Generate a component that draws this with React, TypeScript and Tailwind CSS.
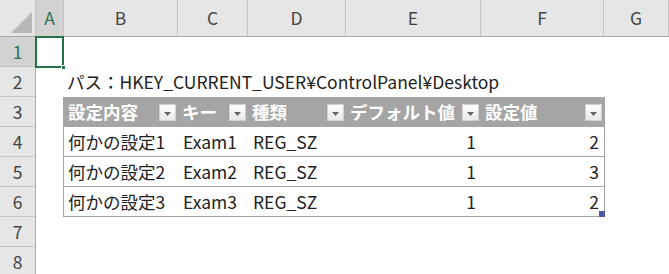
import React from "react";

const FONT = { fontFamily: '"Noto Sans CJK JP", "Noto Sans", sans-serif' };

const colHeaders = [
  { label: "A", cls: "w-[28px] bg-[#d2d2d2] text-[#2f6f52]" },
  { label: "B", cls: "w-[114px]" },
  { label: "C", cls: "w-[70px]" },
  { label: "D", cls: "w-[98px]" },
  { label: "E", cls: "w-[135px]" },
  { label: "F", cls: "w-[123px]" },
  { label: "G", cls: "flex-1" },
];

const tableCols = [
  { head: "設定内容", w: "w-[114px]" },
  { head: "キー", w: "w-[70px]" },
  { head: "種類", w: "w-[98px]" },
  { head: "デフォルト値", w: "w-[135px]" },
  { head: "設定値", w: "w-[123px]" },
];

const rows = [
  ["何かの設定1", "Exam1", "REG_SZ", "1", "2"],
  ["何かの設定2", "Exam2", "REG_SZ", "1", "3"],
  ["何かの設定3", "Exam3", "REG_SZ", "1", "2"],
];

function FilterButton() {
  return (
    <span className="ml-auto mr-[2px] flex h-[17px] w-[17px] shrink-0 items-center justify-center border border-[#d0d0d0] bg-gradient-to-b from-white to-[#e9e9e9] pt-[3px]">
      <svg width="7" height="4" viewBox="0 0 7 4">
        <path d="M0 0h7L3.5 4z" fill="#666" />
      </svg>
    </span>
  );
}

export default function App() {
  return (
    <div className="h-[274px] w-[669px] overflow-hidden bg-white text-[17.5px] leading-none" style={FONT}>
      {/* column letters */}
      <div className="flex h-[37px] border-b border-[#a8a8a8] bg-[#e6e6e6] text-[#444]">
        <div className="relative w-[36px] shrink-0 border-r border-[#c4c4c4]">
          <svg className="absolute bottom-[3px] right-[3px]" width="21" height="21" viewBox="0 0 21 21">
            <path d="M21 0V21H0z" fill="#b8b8b8" />
          </svg>
        </div>
        {colHeaders.map((c) => (
          <div
            key={c.label}
            className={`flex shrink-0 items-center justify-center border-r border-[#c4c4c4] ${c.cls}`}
          >
            {c.label}
          </div>
        ))}
      </div>

      <div className="flex">
        {/* row numbers */}
        <div className="flex w-[36px] shrink-0 flex-col border-r border-[#a8a8a8] bg-[#e6e6e6] text-[#444]">
          {[1, 2, 3, 4, 5, 6, 7, 8].map((n) => (
            <div
              key={n}
              className={`flex h-[30px] shrink-0 items-center justify-center border-b border-[#c4c4c4] ${
                n === 1 ? "bg-[#d2d2d2] text-[#2f6f52]" : ""
              }`}
            >
              {n}
            </div>
          ))}
        </div>

        {/* sheet */}
        <div className="flex flex-1 flex-col text-[#222]">
          {/* row 1 with active cell A1 */}
          <div className="relative h-[30px]">
            <div className="absolute left-[-1px] top-[-1px] h-[32px] w-[29px] border-2 border-[#217346]" />
            <div className="absolute left-[25px] top-[28px] h-[5px] w-[5px] border border-white bg-[#217346]" />
          </div>

          {/* row 2 */}
          <div className="flex h-[30px] items-center whitespace-nowrap pl-[31px]">
            パス：HKEY_CURRENT_USER¥ControlPanel¥Desktop
          </div>

          {/* table B3:F6 */}
          <div className="relative ml-[27px] w-[542px]">
            <div className="flex h-[30px] bg-[#a5a5a5] pl-[1px] font-bold text-white">
              {tableCols.map((c) => (
                <div key={c.head} className={`flex items-center whitespace-nowrap pl-[4px] ${c.w}`}>
                  <span>{c.head}</span>
                  <FilterButton />
                </div>
              ))}
            </div>
            <div className="border-x border-[#a5a5a5]">
              {rows.map((r, i) => (
                <div key={i} className="flex h-[30px] border-b border-[#a5a5a5]">
                  <div className="flex w-[114px] items-center pl-[4px]">{r[0]}</div>
                  <div className="flex w-[70px] items-center pl-[5px]">{r[1]}</div>
                  <div className="flex w-[98px] items-center pl-[5px]">{r[2]}</div>
                  <div className="flex w-[135px] items-center justify-end pr-[5px]">{r[3]}</div>
                  <div className="flex w-[121px] items-center justify-end pr-[3px]">{r[4]}</div>
                </div>
              ))}
            </div>
            <div className="absolute bottom-0 right-0 h-[6px] w-[6px] bg-[#4a5aa6]" />
          </div>
        </div>
      </div>
    </div>
  );
}
